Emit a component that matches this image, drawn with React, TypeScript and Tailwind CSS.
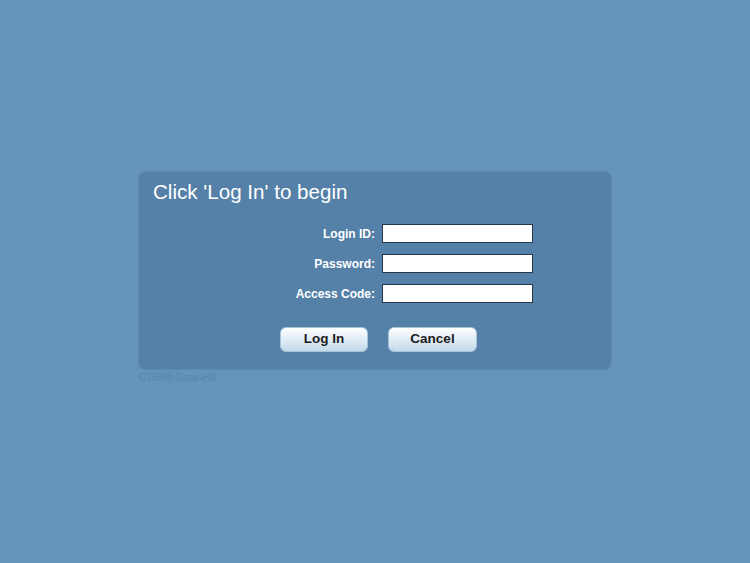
import React from 'react';

const fields = ['Login ID:', 'Password:', 'Access Code:'];

const App: React.FC = () => {
  return (
    <div
      className="w-[750px] h-[563px] bg-[#6594b8] pt-[172px] pl-[139px]"
      style={{ fontFamily: '"Liberation Sans", Arial, sans-serif' }}
    >
      <div className="w-[472px] h-[197px] rounded-[7px] bg-[#5580a7] shadow-[0_0_2px_rgba(40,70,100,0.35)]">
        <h1 className="pl-[14px] pt-[8px] text-[20.6px] leading-[24px] text-white">Click 'Log In' to begin</h1>
        <div className="mt-[20px] flex flex-col gap-[11px]">
          {fields.map((label) => (
            <div key={label} className="flex items-center h-[19px]">
              <label className="w-[236px] text-right text-[12px] font-bold text-white">{label}</label>
              <input
                type={label === 'Password:' ? 'password' : 'text'}
                className="ml-[7px] w-[151px] h-[19px] bg-white border border-[#26384a] outline-none"
              />
            </div>
          ))}
        </div>
        <div className="mt-[24px] flex gap-[20px] pl-[141px]">
          <button className="w-[88px] h-[25px] rounded-[6px] bg-gradient-to-b from-white to-[#c2d9ea] border border-[#a8c4da] text-[13.5px] font-bold text-[#1c1c1c]">
            Log In
          </button>
          <button className="w-[89px] h-[25px] rounded-[6px] bg-gradient-to-b from-white to-[#c2d9ea] border border-[#a8c4da] text-[13.5px] font-bold text-[#1c1c1c]">
            Cancel
          </button>
        </div>
      </div>
      <p className="mt-[3px] text-[10px] leading-[12px] text-[#5686ad]">CTB/McGraw-Hill</p>
    </div>
  );
};

export default App;
